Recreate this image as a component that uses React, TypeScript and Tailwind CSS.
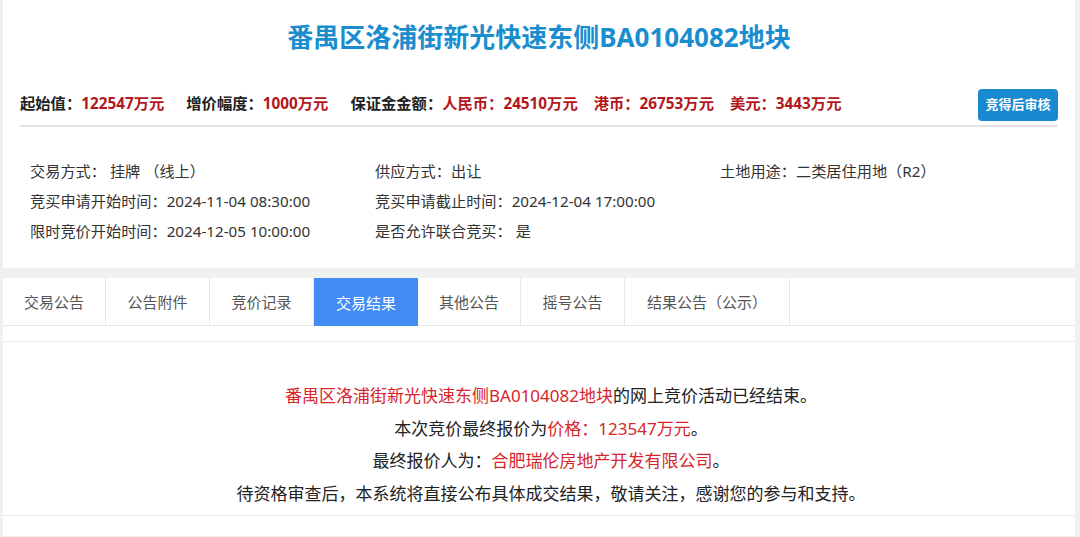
import React from 'react';

const font = { fontFamily: '"Noto Sans", "Noto Sans CJK SC", sans-serif' };

const tabs = ['交易公告', '公告附件', '竞价记录', '交易结果', '其他公告', '摇号公告', '结果公告（公示）'];
const tabWidths = [103, 104, 104, 104, 103, 104, 165];

function Money({ label, value, className = '' }: { label: string; value: string; className?: string }) {
  return (
    <span className={className}>
      {label && <span className="text-[#222]">{label}</span>}
      <span className="text-[#b3161b]">{value}</span>
    </span>
  );
}

export default function App() {
  return (
    <div style={font} className="min-h-[537px] bg-[#f0f0f0] pl-[3px] pr-[5px]">
      {/* header card */}
      <div className="h-[268px] bg-white">
        <h1 className="pt-[19px] text-center text-[26px] font-bold leading-[36px] text-[#1a8dcf]">
          番禺区洛浦街新光快速东侧BA0104082地块
        </h1>

        <div className="mx-[17px] mt-[32px] flex h-[40px] justify-between border-b-2 border-[#e2e2e2] pb-[4px]">
          <div className="flex items-center self-center pb-[3px] text-[15.3px] font-bold leading-[20px]">
            <Money label="起始值：" value="122547万元" />
            <Money label="增价幅度：" value="1000万元" className="ml-[22px]" />
            <Money label="保证金金额：" value="" className="ml-[22px]" />
            <Money label="" value="人民币：24510万元" />
            <Money label="" value="港币：26753万元" className="ml-[16px]" />
            <Money label="" value="美元：3443万元" className="ml-[16px]" />
          </div>
          <button className="h-[32px] w-[80px] self-end rounded-[4px] bg-[#1a8ad0] text-[13px] font-bold text-white">
            竞得后审核
          </button>
        </div>

        <div className="grid grid-cols-[345px_345px_1fr] pl-[27px] pt-[29px] text-[15.2px] leading-[30px] text-[#333]">
          <div>交易方式： 挂牌 （线上）</div>
          <div>供应方式：出让</div>
          <div>土地用途：二类居住用地（R2）</div>
          <div>竞买申请开始时间：2024-11-04 08:30:00</div>
          <div>竞买申请截止时间：2024-12-04 17:00:00</div>
          <div />
          <div>限时竞价开始时间：2024-12-05 10:00:00</div>
          <div>是否允许联合竞买： 是</div>
        </div>
      </div>

      {/* tabs + result card */}
      <div className="mt-[10px] bg-white">
        <div className="flex h-[48px] border-b border-[#e8e8e8]">
          {tabs.map((t, i) => (
            <div
              key={t}
              className={
                i === 3
                  ? 'flex h-[48px] items-center justify-center bg-[#428cf4] pt-[2px] text-[15px] text-white'
                  : 'flex h-[47px] items-center justify-center border-r border-[#e8e8e8] pt-[2px] text-[15px] text-[#555]'
              }
              style={{ width: tabWidths[i] }}
            >
              {t}
            </div>
          ))}
        </div>
        <div className="h-[15px]" />
        <div className="border-y border-[#ececec] pb-[5px] pl-[24px] pt-[38px] text-center text-[17px] leading-[32.5px] text-[#222]">
          <p>
            <span className="text-[#d6262c]">番禺区洛浦街新光快速东侧BA0104082地块</span>的网上竞价活动已经结束。
          </p>
          <p>
            本次竞价最终报价为<span className="text-[#d6262c]">价格：123547万元</span>。
          </p>
          <p>
            最终报价人为：<span className="text-[#d6262c]">合肥瑞伦房地产开发有限公司</span>。
          </p>
          <p>待资格审查后，本系统将直接公布具体成交结果，敬请关注，感谢您的参与和支持。</p>
        </div>
        <div className="h-[20px]" />
      </div>
    </div>
  );
}
